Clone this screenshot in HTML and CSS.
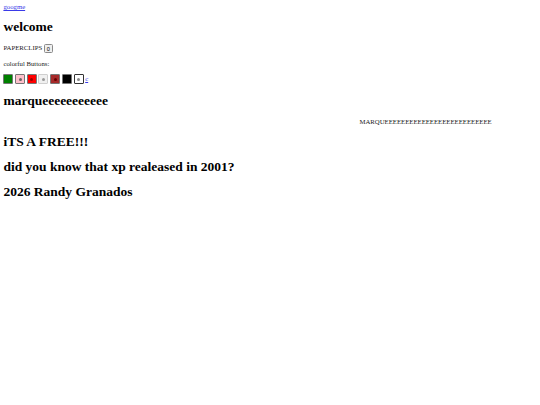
FILE: index.html
```html
<!DOCTYPE html>
<html>
<head>
<meta charset="utf-8">
<link rel="stylesheet" href="styles.css">
</head>
<body>
<a class="top-link" href="#">googme</a>
<h1 class="title">welcome</h1>
<p class="line">PAPERCLIPS <button class="counter">0</button></p>
<p class="line">colorful Buttons:</p>
<p class="line swatches"><button class="sw sw-green"></button> <button class="sw sw-pink"><span class="dot"></span></button> <button class="sw sw-red"><span class="dot"></span></button> <button class="sw sw-white"><span class="dot"></span></button> <button class="sw sw-brown"><span class="dot"></span></button> <button class="sw sw-black"></button> <button class="sw sw-outline"><span class="dot"></span></button> <a class="small-link" href="#">c</a></p>
<h1 class="title">marqueeeeeeeeeee</h1>
<div class="marquee"><span class="marquee-text">MARQUEEEEEEEEEEEEEEEEEEEEEEEEEE</span></div>
<h1 class="title">iTS A FREE!!!</h1>
<h1 class="title">did you know that xp realeased in 2001?</h1>
<h1 class="title">2026 Randy Granados</h1>
</body>
</html>
```
FILE: styles.css
```css
html, body {
  background: #ffffff;
}
body {
  margin: 3.4px;
  font-family: "Liberation Serif", "Times New Roman", serif;
  font-size: 6.75px;
  color: #222;
}
.top-link {
  color: #3a3ae8;
  text-decoration: underline;
}
.title {
  font-size: 13.5px;
  font-weight: bold;
  color: #000;
  margin: 9px 0;
}
.line {
  margin: 6.75px 0;
}
.counter {
  font-family: "Liberation Sans", Arial, sans-serif;
  font-size: 5.6px;
  height: 9px;
  min-width: 9px;
  padding: 0 2px;
  border: 1px solid #8a8a8a;
  border-radius: 1.5px;
  background: #efefef;
  color: #000;
  vertical-align: middle;
}
.swatches {
  line-height: 10px;
}
.sw {
  width: 10px;
  height: 10px;
  padding: 0;
  border: 1px solid #767676;
  border-radius: 1px;
  display: inline-flex;
  align-items: center;
  justify-content: center;
  vertical-align: middle;
}
.dot {
  width: 3px;
  height: 3px;
  background: #666;
  border-radius: 50%;
}
.sw-green { background: #008000; }
.sw-pink { background: #ffc0cb; }
.sw-red { background: #ff0000; }
.sw-red .dot { background: #900; }
.sw-white { background: #f0f0f0; border-color: #cfcfcf; }
.sw-white .dot { background: #999; }
.sw-brown { background: #a52a2a; }
.sw-brown .dot { background: #600; }
.sw-black { background: #000000; }
.sw-outline { background: #ffffff; border: 1px solid #333; }
.sw-outline .dot { background: #888; }
.small-link {
  color: #3a3ae8;
  text-decoration: underline;
  vertical-align: middle;
}
.marquee {
  overflow: hidden;
  white-space: nowrap;
  padding-left: 356px;
}
```
